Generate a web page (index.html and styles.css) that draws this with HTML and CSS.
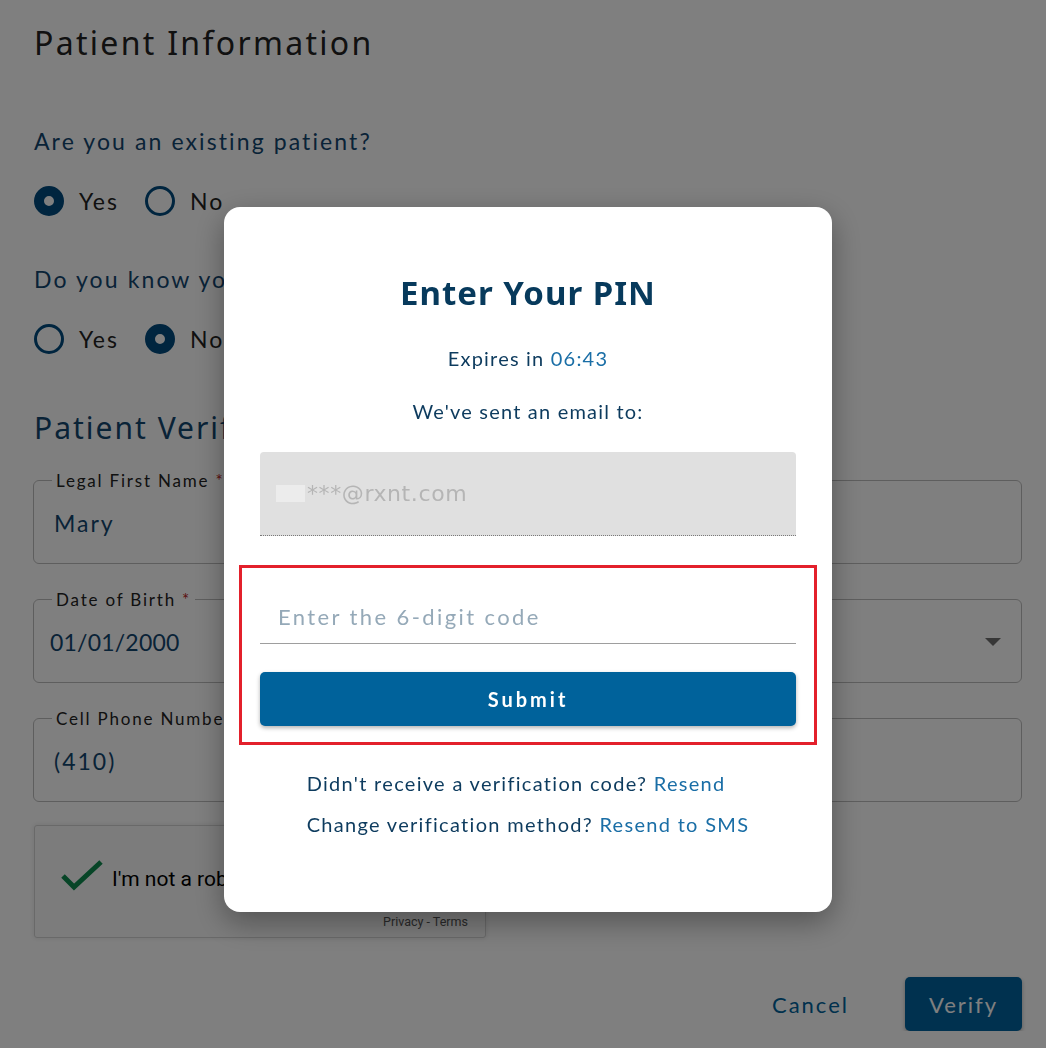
FILE: index.html
```html
<!DOCTYPE html>
<html lang="en">
<head>
	<meta charset="UTF-8">
	<title>Patient Information</title>
	<link rel="stylesheet" href="styles.css">
</head>
<body>
	<div class="page">
		<h1 class="page-title">Patient Information</h1>

		<p class="question">Are you an existing patient?</p>
		<div class="radios">
			<label class="radio"><span class="dot checked"></span>Yes</label>
			<label class="radio"><span class="dot"></span>No</label>
		</div>

		<p class="question">Do you know your patient ID?</p>
		<div class="radios">
			<label class="radio"><span class="dot"></span>Yes</label>
			<label class="radio"><span class="dot checked"></span>No</label>
		</div>

		<h2 class="section-title">Patient Verification</h2>

		<div class="fields">
			<fieldset class="field">
				<legend>Legal First Name <span class="req">*</span></legend>
				<div class="value">Mary</div>
			</fieldset>
			<fieldset class="field">
				<legend>Legal Last Name <span class="req">*</span></legend>
				<div class="value"></div>
			</fieldset>
			<fieldset class="field">
				<legend>Date of Birth <span class="req">*</span></legend>
				<div class="value date">01/01/2000</div>
			</fieldset>
			<fieldset class="field">
				<legend>Gender <span class="req">*</span></legend>
				<div class="value select"><span></span><span class="caret"></span></div>
			</fieldset>
			<fieldset class="field">
				<legend>Cell Phone Number <span class="req">*</span></legend>
				<div class="value">(410) <span class="redact"></span></div>
			</fieldset>
			<fieldset class="field">
				<legend>Email <span class="req">*</span></legend>
				<div class="value"></div>
			</fieldset>
		</div>

		<div class="captcha">
			<div class="captcha-row">
				<svg class="check" width="44" height="32" viewBox="0 0 44 32">
					<path d="M3 17 L14 28 L41 3" fill="none" stroke="#0e8a4e" stroke-width="5"/>
				</svg>
				<span class="captcha-text">I'm not a robot</span>
			</div>
			<div class="captcha-links">Privacy - Terms</div>
		</div>

		<div class="actions">
			<button class="btn-text">Cancel</button>
			<button class="btn-verify">Verify</button>
		</div>
	</div>

	<div class="overlay">
		<div class="modal">
			<h3 class="modal-title">Enter Your PIN</h3>
			<p class="modal-line">Expires in <span class="link">06:43</span></p>
			<p class="modal-line">We've sent an email to:</p>
			<div class="email-box"><span class="mask"></span>***@rxnt.com</div>

			<div class="highlight">
				<div class="code-input">Enter the 6-digit code</div>
				<button class="btn-submit">Submit</button>
			</div>

			<div class="help">
				<p>Didn't receive a verification code? <span class="link">Resend</span></p>
				<p>Change verification method? <span class="link">Resend to SMS</span></p>
			</div>
		</div>
	</div>
</body>
</html>
```

FILE: styles.css
```css
*{
	margin: 0;
	padding: 0;
	box-sizing: border-box;
}
body{
	background: #fff;
	font-family: Lato, "Noto Sans", sans-serif;
	color: #13466f;
}
.page{
	padding: 22px 24px 0 34px;
}
.page-title{
	font-family: "Noto Sans", sans-serif;
	font-weight: 400;
	font-size: 32px;
	line-height: 42px;
	color: #222;
	letter-spacing: 2.3px;
}
.question{
	margin-top: 60px;
	font-size: 23px;
	line-height: 30px;
	letter-spacing: 2.1px;
	color: #13466f;
}
.question + .radios{
	margin-top: 30px;
}
.page-title + .question{
	margin-top: 62px;
}
.radios + .question{
	margin-top: 48px;
}
.radios{
	display: flex;
	gap: 26px;
	height: 30px;
}
.radio{
	display: flex;
	align-items: center;
	gap: 15px;
	font-size: 23px;
	letter-spacing: 2px;
	color: #222;
}
.dot{
	width: 30px;
	height: 30px;
	border-radius: 50%;
	border: 3px solid #004a7e;
}
.dot.checked{
	border: 10px solid #004a7e;
	background: #fff;
}
.section-title{
	margin-top: 54px;
	font-family: "Noto Sans", sans-serif;
	font-weight: 400;
	font-size: 30px;
	line-height: 40px;
	letter-spacing: 2px;
	color: #13466f;
}
.fields{
	margin-top: 22px;
	display: grid;
	grid-template-columns: 1fr 1fr;
	column-gap: 20px;
	row-gap: 25px;
	margin-left: -1px;
}
.field{
	height: 94px;
	border: 1px solid #bdbdbd;
	border-radius: 6px;
	padding: 0 20px;
}
.field legend{
	padding: 0 4px;
	margin-left: -2px;
	font-size: 17px;
	letter-spacing: 1.8px;
	color: #222;
}
.req{
	color: #b71c1c;
}
.value{
	margin-top: 14px;
	font-size: 23px;
	letter-spacing: 2px;
	color: #13466f;
	display: flex;
	align-items: center;
	height: 36px;
}
.value.date{
	margin-left: -4px;
	letter-spacing: 0.2px;
}
.value.select{
	justify-content: space-between;
}
.caret{
	width: 0;
	height: 0;
	border-left: 8px solid transparent;
	border-right: 8px solid transparent;
	border-top: 8px solid #6e6e6e;
}
.redact{
	display: inline-block;
	width: 100px;
	height: 40px;
	margin-left: 8px;
	background: #fff;
}
.captcha{
	margin-top: 23px;
	width: 452px;
	height: 113px;
	border: 1px solid #d3d3d3;
	border-radius: 3px;
	background: #f9f9f9;
	box-shadow: 0 0 4px 1px rgba(0, 0, 0, 0.08);
	padding: 33px 16px 0 25px;
	position: relative;
	font-family: Roboto, sans-serif;
}
.captcha-row{
	display: flex;
	align-items: center;
	gap: 8px;
}
.captcha-text{
	font-size: 21px;
	color: #000;
	margin-top: 7px;
}
.captcha-links{
	position: absolute;
	right: 17px;
	bottom: 8px;
	font-size: 12.5px;
	color: #555;
}
.actions{
	display: flex;
	justify-content: flex-end;
	align-items: center;
	gap: 56px;
	margin-top: 39px;
}
.btn-text{
	border: none;
	background: none;
	font-family: Lato, "Noto Sans", sans-serif;
	font-size: 22px;
	letter-spacing: 2px;
	color: #00629b;
}
.btn-verify{
	width: 117px;
	height: 54px;
	border: none;
	border-radius: 5px;
	background: #00639f;
	color: #fff;
	font-family: Lato, "Noto Sans", sans-serif;
	font-size: 22px;
	letter-spacing: 2px;
	box-shadow: 0 2px 4px rgba(0, 0, 0, 0.3);
}

/* modal */
.overlay{
	position: fixed;
	top: 0;
	left: 0;
	right: 0;
	bottom: 0;
	background: rgba(0, 0, 0, 0.5);
	padding: 207px 0 0 224px;
}
.modal{
	width: 608px;
	height: 705px;
	background: #fff;
	border-radius: 16px;
	padding: 64px 36px 0 36px;
	box-shadow: 0 10px 30px rgba(0, 0, 0, 0.35);
	text-align: center;
	color: #0d3b5e;
}
.modal-title{
	font-family: "Noto Sans", sans-serif;
	font-weight: 700;
	font-size: 33px;
	line-height: 44px;
	letter-spacing: 1px;
	color: #073a5c;
}
.modal-line{
	margin-top: 23px;
	font-size: 20px;
	line-height: 30px;
	letter-spacing: 1.2px;
}
.modal-title + .modal-line{
	margin-top: 28px;
}
.link{
	color: #1a6ea6;
}
.email-box{
	margin-top: 26px;
	height: 84px;
	background: #e0e0e0;
	border-radius: 4px 4px 0 0;
	border-bottom: 1px dotted #7a7a7a;
	text-align: left;
	padding: 0 16px;
	display: flex;
	align-items: center;
	font-family: "DejaVu Sans", sans-serif;
	font-size: 22px;
	letter-spacing: 0.6px;
	color: #b5b5b5;
}
.mask{
	display: inline-block;
	width: 29px;
	height: 17px;
	background: #ececec;
	margin-right: 2px;
}
.highlight{
	margin: 29px -21px 0 -21px;
	border: 3px solid #e3202b;
	padding: 24px 18px 16px 18px;
}
.code-input{
	height: 52px;
	border-bottom: 1px solid #9e9e9e;
	text-align: left;
	padding: 11px 18px 0;
	font-size: 22px;
	letter-spacing: 2.4px;
	color: #95a9b8;
}
.btn-submit{
	display: block;
	width: 100%;
	margin-top: 28px;
	height: 54px;
	border: none;
	border-radius: 5px;
	background: #00629b;
	color: #fff;
	font-family: Lato, "Noto Sans", sans-serif;
	font-weight: 700;
	font-size: 20px;
	letter-spacing: 3px;
	box-shadow: 0 2px 4px rgba(0, 0, 0, 0.3);
}
.help{
	display: inline-block;
	margin-top: 18px;
	text-align: left;
	font-size: 20px;
	line-height: 41px;
	letter-spacing: 1.3px;
}
```
